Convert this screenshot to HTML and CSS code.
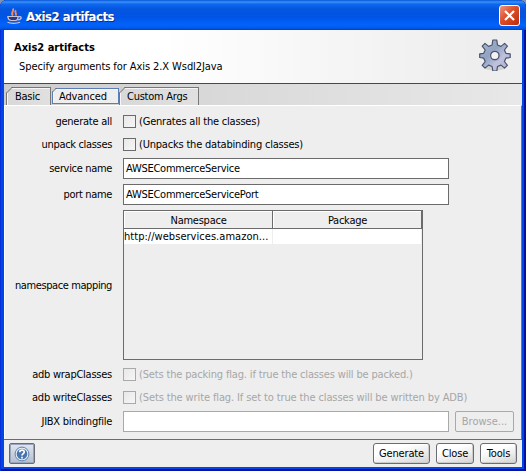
FILE: index.html
```html
<!DOCTYPE html>
<html lang="en">
<head>
<meta charset="utf-8">
<title>Axis2 artifacts</title>
<link rel="stylesheet" href="styles.css">
</head>
<body>
<div class="window">
  <header class="titlebar">
    <svg class="java" width="16" height="16" viewBox="0 0 16 16" fill="none">
      <path d="M6 7.500C3 5 7.500 3.500 6 .5M8.500 7.500C10.500 5.500 7 5 8.800 2.300" stroke="#f58a5e" stroke-width="1.900"/>
      <path d="M.8 8.500h10.400c0 2-.8 3.400-2.400 4H4c-2-.6-3.200-2-3.200-4z" fill="#34387c" stroke="#c9c5d8" stroke-width="1.200"/>
      <path d="M11.500 8.800c4-1 3.500 3-.8 3.200M.5 14.300c3 1.400 9 1.400 12.500 0" stroke="#c9c5d8" stroke-width="1.200"/>
    </svg>
    <h1 class="caption">Axis2 artifacts</h1>
    <button class="close" aria-label="Close window">
      <svg width="19" height="19" viewBox="0 0 19 19"><path d="M5 5l9 9M14 5l-9 9" stroke="#fff" stroke-width="2.200"/></svg>
    </button>
  </header>
  <main class="client">
    <section class="banner">
      <div>
        <h2 class="heading">Axis2 artifacts</h2>
        <p class="sub">Specify arguments for Axis 2.X Wsdl2Java</p>
      </div>
      <svg class="gear" width="32" height="32" viewBox="0 0 32 32">
        <defs><linearGradient id="steel" x1="0" y1="0" x2="1" y2="1"><stop offset="0" stop-color="#a9b8ce"/><stop offset=".4" stop-color="#8fa3c2"/><stop offset=".65" stop-color="#c0c1df"/><stop offset="1" stop-color="#a3aec8"/></linearGradient></defs>
        <ellipse cx="16" cy="29" rx="10" ry="2.500" fill="#d3d3d3"/>
        <path fill="url(#steel)" stroke="#4a536c" stroke-width="1.200" stroke-linejoin="round" d="M13.800 1h4l.7 5 3.500 1.400 3.600-3 2.800 2.800-3 3.800 1.500 3.300 4.300.6v3.600l-4.300.7-1.500 3.300 3 3.800-2.800 2.800-3.600-3-3.500 1.400-.7 4.500h-4l-.7-4.500-3.500-1.400-3.600 3-2.800-2.800 3-3.800-1.500-3.300-4-.7v-3.600l4-.6 1.500-3.300-3-3.800 2.800-2.800 3.600 3 3.500-1.400z"/>
        <circle cx="15.800" cy="16.500" r="5.600" fill="#a3adc6"/>
        <circle cx="15.800" cy="16.500" r="4.200" fill="#f3f3f3" stroke="#4a536c" stroke-width="1.200"/>
      </svg>
    </section>
    <nav class="tabs">
      <a class="tab basic"><svg class="notch" width="7" height="7"><path class="cut" d="M0 0H6L0 6z"/><path class="slant" d="M0 6.500L6.500 0"/></svg><span>Basic</span></a>
      <a class="tab advanced"><svg class="notch" width="5" height="5"><path class="cut" d="M0 0H4L0 4z"/><path class="slant" d="M0 4.500L4.500 0"/></svg><span>Advanced</span></a>
      <a class="tab custom"><svg class="notch" width="7" height="7"><path class="cut" d="M0 0H6L0 6z"/><path class="slant" d="M0 6.500L6.500 0"/></svg><span>Custom Args</span></a>
    </nav>
    <form class="panel">
      <div class="row check"><label><span class="t1">generate all</span></label><i class="box"></i><span class="note n1">(Genrates all the classes)</span></div>
      <div class="row check second"><label><span class="t2">unpack classes</span></label><i class="box"></i><span class="note n2">(Unpacks the databinding classes)</span></div>
      <div class="row field wide"><label><span class="t3">service name</span></label><div class="input"><span class="v1">AWSECommerceService</span></div></div>
      <div class="row field"><label><span class="t4">port name</span></label><div class="input"><span class="v2">AWSECommerceServicePort</span></div></div>
      <div class="row mapping"><label><span class="t5">namespace mapping</span></label>
        <div class="table">
          <div class="th"><span>Namespace</span></div><div class="th"><span>Package</span></div>
          <div class="td"><span class="url">http://webservices.amazon...</span></div><div class="td"></div>
        </div>
      </div>
      <div class="row check off third"><label><span class="t6">adb wrapClasses</span></label><i class="box"></i><span class="note n3">(Sets the packing flag. if true the classes will be packed.)</span></div>
      <div class="row check off second"><label><span class="t6">adb writeClasses</span></label><i class="box"></i><span class="note n4">(Sets the write flag. If set to true the classes will be written by ADB)</span></div>
      <div class="row field wide off"><label><span class="t6">JIBX bindingfile</span></label><div class="input"></div><button type="button" class="browse" disabled><span>Browse...</span></button></div>
    </form>
    <footer class="actions">
      <button class="help" aria-label="Help"><svg width="16" height="16" viewBox="0 0 16 16"><circle cx="8" cy="8" r="6.900" fill="#e5edf6" stroke="#5d80ad"/><circle cx="8" cy="8" r="5.300" fill="#4975ad"/><path d="M5.700 6.300C5.800 3.300 10.500 3.400 10.200 6.100 10.100 7.700 8 7.500 8 9.600M8 10.700v1.700" fill="none" stroke="#fff" stroke-width="1.700"/></svg></button>
      <button class="push generate"><span>Generate</span></button>
      <button class="push shut"><span>Close</span></button>
      <button class="push tools"><span>Tools</span></button>
    </footer>
  </main>
</div>
</body>
</html>
```
FILE: styles.css
```css
* { box-sizing: border-box; }
body { margin: 0; background: #7f91b4; font: 11px/14px "DejaVu Sans Condensed", "Noto Sans", sans-serif; color: #000; }
h1, h2, p { margin: 0; }
button { font: inherit; color: inherit; padding: 0; }
span { white-space: nowrap; }
.window { width: 526px; height: 471px; padding: 0 4px 4px; border-radius: 7px 7px 0 0; overflow: hidden; background: #0046e6; box-shadow: inset 1px 0 #0831d9, inset -2px -2px #0010a0, inset 0 1px #0048c8; }
.titlebar { height: 30px; margin: 0 -4px; padding: 1px 6px 0 7px; display: flex; align-items: center; background: linear-gradient(#0754d5 0, #3a92fa 2px, #0e69ef 4px, #0556df 9px, #0054e5 17px, #0263fc 25px, #0059ed 28px, #0040c0 30px); }
.caption { flex: 1; padding-top: 2px; margin-left: 3px; font: bold 13px/16px "DejaVu Sans Condensed", sans-serif; color: #fff; text-shadow: 1px 1px #102f78; letter-spacing: -.5px; }
.java { margin-top: 1px; }
.close { width: 21px; height: 21px; border: 1px solid #fff; border-radius: 3px; background: linear-gradient(135deg, #ef957c, #dc4d29 45%, #bc2e0b); }
.close svg { display: block; }
.client { height: 437px; background: #eee; display: flex; flex-direction: column; }
.banner { height: 54px; border-bottom: 1px solid #484848; background: linear-gradient(90deg, #fff, #fff 30%, #eee 90%); display: flex; justify-content: space-between; padding: 10px 11px 0 10px; }
.heading { font: bold 11px/16px "DejaVu Sans Condensed", sans-serif; }
.sub { margin: 3px 0 0 5px; line-height: 16px; letter-spacing: -.08px; }
.gear { margin-top: -1px; }
.tabs { height: 21px; display: flex; align-items: flex-end; padding-left: 2px; background: linear-gradient(90deg, #ccc, #dadada 45%, #e8e8e8); }
.tab { position: relative; height: 18px; border: 1px solid #777; border-bottom: 0; background: linear-gradient(90deg, #d8d8d8, #e0e0e0); padding-left: 8px; line-height: 18px; letter-spacing: -.25px; box-shadow: inset 1px 1px #f6f6f6; }
.notch { position: absolute; left: -1px; top: -1px; }
.cut { fill: #cecece; }
.slant { fill: none; stroke: #666; }
.basic { width: 45px; }
.advanced { width: 67px; height: 16px; margin: 0 0 1px 1px; background: #eee; border: 1px solid #5a7eb5; padding-left: 6px; line-height: 16px; letter-spacing: -.12px; }
.custom { width: 80px; padding-left: 7px; }
.panel { height: 334px; border-top: 1px solid #fff; border-left: 1px solid #fff; border-right: 1px solid #777; padding-top: 9px; }
.row { display: flex; align-items: center; }
.row label { width: 107px; margin-right: 11px; text-align: right; }
.box { width: 13px; height: 13px; border: 1px solid #6b6b6b; background: linear-gradient(135deg, #e8e8e8, #f6f6f6); margin-right: 3px; }
.check { height: 13px; }
.second { margin-top: 10px; }
.third { margin-top: 8px; }
.field { margin-top: 5px; height: 21px; }
.wide { margin-top: 7px; }
.input { width: 326px; height: 21px; border: 1px solid #6b6b6b; background: #fff; padding-left: 2px; line-height: 19px; }
.off .note, .off .browse { color: #a6a6a6; }
.off .box, .off .input { border-color: #a9a9a9; }
.t1, .t6 { letter-spacing: -.25px; }
.t2, .t3, .t4 { letter-spacing: -.33px; }
.t5 { letter-spacing: -.4px; position: relative; top: 1px; }
.n1, .n2 { letter-spacing: -.2px; }
.n3 { letter-spacing: -.16px; }
.n4 { letter-spacing: -.12px; }
.v1, .v2 { letter-spacing: -.26px; }
.url { letter-spacing: .04px; }
.mapping { height: 150px; margin-top: 5px; }
.table { width: 300px; height: 150px; border: 1px solid #6b6b6b; display: grid; grid-template: 18px 15px / 149px 149px; }
.th { border-right: 1px solid #6b6b6b; border-bottom: 1px solid #6b6b6b; box-shadow: inset 1px 1px #fff; text-align: center; line-height: 19px; padding-left: 1px; letter-spacing: -.25px; }
.td { background: #fff; border-right: 1px solid #eee; line-height: 15px; }
.browse { width: 59px; height: 21px; margin-left: 6px; border: 1px solid #a9a9a9; border-radius: 2px; background: #eee; }
.actions { height: 28px; border-top: 1px solid #6b6b6b; display: flex; padding: 3px 5px 0; gap: 6px; }
.push { height: 21px; border: 1px solid #6b6b73; border-radius: 3px; background: linear-gradient(165deg, #fff 30%, #eee 60%, #d2d2d2); box-shadow: inset -1px -1px #ccc, inset 1px 1px #fff; letter-spacing: -.15px; }
.help { width: 26px; height: 21px; margin-right: auto; border: 1px solid #6b6b73; border-radius: 2px; background: linear-gradient(#e0e6f0, #b4bece); box-shadow: inset 0 0 0 1px #98a5bb; display: grid; place-items: center; }
.generate { width: 57px; }
.shut { width: 38px; }
.tools { width: 37px; }
```
